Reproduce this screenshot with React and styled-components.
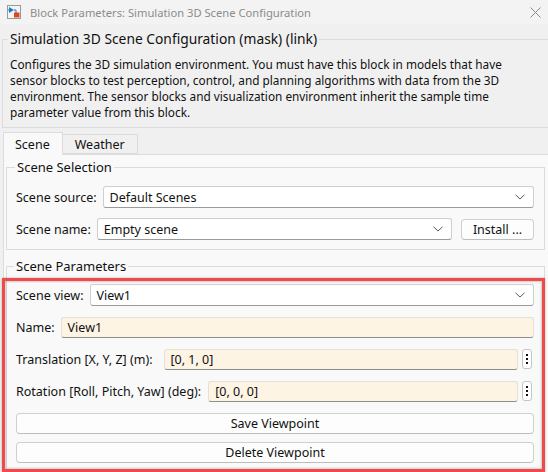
import React from "react";
import styled, { createGlobalStyle } from "styled-components";

const Global = createGlobalStyle`
  html, body { margin: 0; padding: 0; background: #f0f0f0; }
  body { font-family: "Noto Sans", "Segoe UI", sans-serif; font-size: 12px; color: #111; }
  * { box-sizing: border-box; }
`;

const Window = styled.div`
  width: 548px;
  height: 472px;
  overflow: hidden;
  background: #f0f0f0;
  display: flex;
  flex-direction: column;
`;

const TitleBar = styled.div`
  height: 24px;
  flex: none;
  display: flex;
  align-items: center;
  padding: 0 7px;
  gap: 9px;
  background: #f3f3f3;
  color: #8c8c8c;
  font-size: 11.2px;
`;

const TitleText = styled.span`
  flex: 1;
  white-space: nowrap;
`;

const Group = styled.fieldset`
  margin: ${(p) => p.$margin || "0"};
  padding: ${(p) => p.$padding || "0"};
  border: 1px solid #dcdcdc;
  border-right: ${(p) => (p.$noRight ? "none" : "1px solid #dcdcdc")};
  min-width: 0;
  background: ${(p) => p.$bg || "transparent"};
`;

const Legend = styled.legend`
  padding: 0 2px;
  margin-left: ${(p) => p.$ml || "-2px"};
  font-size: ${(p) => p.$size || "13px"};
  line-height: ${(p) => p.$lh || "17px"};
  color: #111;
`;

const Description = styled.p`
  margin: 0;
  font-size: 11.8px;
  line-height: 16px;
  white-space: nowrap;
`;

const TabBar = styled.div`
  display: flex;
  align-items: flex-end;
  margin: 4px 0 0 3px;
  height: 22px;
  flex: none;
`;

const Tab = styled.div`
  height: ${(p) => (p.$active ? "23px" : "20px")};
  margin-bottom: ${(p) => (p.$active ? "-1px" : "0")};
  padding: ${(p) => (p.$active ? "3px 12px 0 11px" : "1px 12px 0 12px")};
  background: ${(p) => (p.$active ? "#f9f9f9" : "#f0f0f0")};
  border: 1px solid #dcdcdc;
  border-bottom: ${(p) => (p.$active ? "none" : "1px solid #dcdcdc")};
  border-left: ${(p) => (p.$first ? "1px solid #dcdcdc" : "none")};
  font-size: 12.5px;
  line-height: 17px;
  position: relative;
  z-index: ${(p) => (p.$active ? 1 : 0)};
`;

const Pane = styled.div`
  flex: 1;
  margin-left: 3px;
  background: #f9f9f9;
  border: 1px solid #dcdcdc;
  border-right: none;
  padding: 4px 3px 0 2px;
`;

const Rows = styled.div`
  display: flex;
  flex-direction: column;
  gap: ${(p) => p.$gap || "10px"};
`;

const Row = styled.div`
  display: flex;
  align-items: center;
  gap: ${(p) => p.$gap || "6px"};
  height: ${(p) => p.$h || "22px"};
`;

const Label = styled.span`
  white-space: nowrap;
  font-size: 12.5px;
  flex: none;
  margin-right: ${(p) => p.$mr || "0"};
`;

const Select = styled.div`
  flex: 1;
  height: 22px;
  display: flex;
  align-items: center;
  justify-content: space-between;
  padding: 0 8px 0 6px;
  background: #fff;
  border: 1px solid #cfcfcf;
  border-bottom-color: #9a9a9a;
  border-radius: 3px;
  font-size: 12.5px;
`;

const Edit = styled.div`
  flex: 1;
  height: 21px;
  display: flex;
  align-items: center;
  padding: 0 6px;
  background: #fef4e4;
  border: 1px solid #e6e0d6;
  border-bottom-color: #8e8e8e;
  border-radius: 3px;
  font-size: 12.5px;
`;

const Button = styled.div`
  flex: ${(p) => (p.$grow ? 1 : "none")};
  width: ${(p) => p.$w || "auto"};
  margin-left: ${(p) => p.$ml || "0"};
  height: 21px;
  display: flex;
  align-items: center;
  justify-content: center;
  background: #fdfdfd;
  border: 1px solid #d0d0d0;
  border-bottom-color: #bdbdbd;
  border-radius: 4px;
  font-size: 12.5px;
`;

const DotsButton = styled.div`
  flex: none;
  width: 10px;
  height: 20px;
  margin-right: 2px;
  display: flex;
  flex-direction: column;
  align-items: center;
  justify-content: center;
  gap: 2px;
  background: #fff;
  border: 1px solid #c4c4c4;
  border-radius: 3px;
  & > i {
    width: 2px;
    height: 2px;
    background: #111;
    display: block;
  }
`;

const RedFrame = styled.div`
  margin: 3px -1px 0 -5px;
  border: 3px solid #f14a4a;
  box-shadow: inset 0 0 2px 1px rgba(0, 0, 0, 0.18), 0 0 2px rgba(0, 0, 0, 0.3);
  padding: 3px 8px 6px 11px;
`;

const Buttons = styled(Rows)`
  margin-top: 11px;
`;

const Chevron = () => (
  <svg width="10" height="6" viewBox="0 0 10 6" fill="none">
    <path d="M0.5 0.8 L5 5 L9.5 0.8" stroke="#5a5a5a" strokeWidth="1" />
  </svg>
);

const BlockIcon = () => (
  <svg width="14" height="14" viewBox="0 0 14 14">
    <rect x="0.5" y="0.5" width="13" height="13" fill="#f4f4f4" stroke="#9a9a9a" />
    <path d="M2 2 L7 5 L2 8 Z" fill="#1e7cc8" />
    <path d="M2 5 H1 M7 5 H9 V8" stroke="#1e7cc8" strokeWidth="1" fill="none" />
    <rect x="7" y="7.5" width="5.5" height="5" fill="#e2461c" />
  </svg>
);

const CloseIcon = () => (
  <svg width="11" height="11" viewBox="0 0 11 11">
    <path d="M0.5 0.5 L10.5 10.5 M10.5 0.5 L0.5 10.5" stroke="#8a8a8a" strokeWidth="1" />
  </svg>
);

const Dots = () => (
  <DotsButton>
    <i />
    <i />
    <i />
  </DotsButton>
);

const descriptionLines = [
  "Configures the 3D simulation environment. You must have this block in models that have",
  "sensor blocks to test perception, control, and planning algorithms with data from the 3D",
  "environment. The sensor blocks and visualization environment inherit the sample time",
  "parameter value from this block.",
];

export default function App() {
  return (
    <Window>
      <Global />
      <TitleBar>
        <BlockIcon />
        <TitleText>Block Parameters: Simulation 3D Scene Configuration</TitleText>
        <CloseIcon />
      </TitleBar>

      <Group $margin="5px 0 0 2px" $padding="7px 6px 7px 7px" $noRight>
        <Legend $size="13.8px" $lh="20px" $ml="-2px">
          Simulation 3D Scene Configuration (mask) (link)
        </Legend>
        <Description>
          {descriptionLines.map((line, i) => (
            <React.Fragment key={i}>
              {line}
              {i < descriptionLines.length - 1 && <br />}
            </React.Fragment>
          ))}
        </Description>
      </Group>

      <TabBar>
        <Tab $active $first>Scene</Tab>
        <Tab>Weather</Tab>
      </TabBar>

      <Pane>
        <Group $padding="10px 10px 9px 9px" $bg="#f9f9f9">
          <Legend $ml="-1px">Scene Selection</Legend>
          <Rows $gap="10px">
            <Row>
              <Label>Scene source:</Label>
              <Select>
                <span>Default Scenes</span>
                <Chevron />
              </Select>
            </Row>
            <Row $gap="6px">
              <Label>Scene name:</Label>
              <Select>
                <span>Empty scene</span>
                <Chevron />
              </Select>
              <Button $w="73px" $ml="3px">Install ...</Button>
            </Row>
          </Rows>
        </Group>

        <Group $margin="8px 0 0 0" $bg="#f9f9f9">
          <Legend $ml="7px">Scene Parameters</Legend>
          <RedFrame>
            <Rows $gap="10px">
              <Row>
                <Label>Scene view:</Label>
                <Select>
                  <span>View1</span>
                  <Chevron />
                </Select>
              </Row>
              <Row>
                <Label>Name:</Label>
                <Edit>View1</Edit>
              </Row>
              <Row $gap="4px">
                <Label $mr="7px">Translation [X, Y, Z] (m):</Label>
                <Edit>[0, 1, 0]</Edit>
                <Dots />
              </Row>
              <Row $gap="4px">
                <Label $mr="3px">Rotation [Roll, Pitch, Yaw] (deg):</Label>
                <Edit>[0, 0, 0]</Edit>
                <Dots />
              </Row>
            </Rows>
            <Buttons $gap="8px">
              <Row $h="21px">
                <Button $grow>Save Viewpoint</Button>
              </Row>
              <Row $h="21px">
                <Button $grow>Delete Viewpoint</Button>
              </Row>
            </Buttons>
          </RedFrame>
        </Group>
      </Pane>
    </Window>
  );
}
